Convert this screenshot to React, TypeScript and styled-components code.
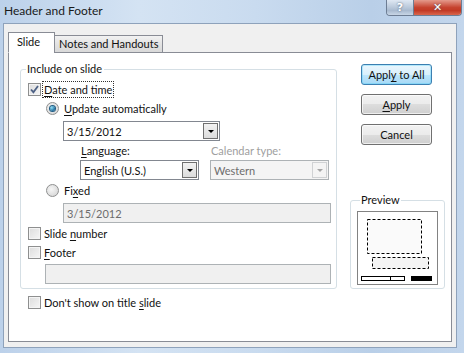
import { FC, ReactNode } from 'react'
import styled, { createGlobalStyle } from 'styled-components'

const GlobalStyle = createGlobalStyle`
  html, body {
    margin: 0;
    padding: 0;
    background: #c8d9ee;
  }
  body {
    font-family: Lato, 'Liberation Sans', Arial, sans-serif;
    font-size: 11px;
    color: #111;
  }
`

const Window = styled.div`
  width: 464px;
  height: 353px;
  display: flex;
  flex-direction: column;
  background: linear-gradient(90deg, #bcd1ea 0%, #d4e3f3 30%, #c9dbef 55%, #b9cfe8 80%, #c3d6ec 100%);
  overflow: hidden;
`

const TitleBar = styled.div`
  height: 23px;
  display: flex;
  justify-content: space-between;
  align-items: flex-start;
  flex-shrink: 0;
`

const Title = styled.div`
  padding: 3px 0 0 4px;
  font-size: 12px;
  color: #1a1a1a;
`

const Controls = styled.div`
  display: flex;
  margin-right: 2px;
  border: 1px solid #6d7d93;
  border-top: none;
  border-radius: 0 0 4px 4px;
  overflow: hidden;
  height: 15px;
`

const CtrlButton = styled.div<{ danger?: boolean }>`
  width: ${(p) => (p.danger ? 47 : 26)}px;
  display: flex;
  align-items: center;
  justify-content: center;
  background: ${(p) =>
    p.danger
      ? 'linear-gradient(#e49a8c, #c6432f 50%, #c23a25 70%, #d9664d)'
      : 'linear-gradient(#dfe8f3, #b9c8da 50%, #a9bacf 70%, #c8d6e6)'};
  border-left: ${(p) => (p.danger ? '1px solid #6d7d93' : 'none')};
  color: #fff;
  font-family: 'DejaVu Sans', sans-serif;
  font-weight: bold;
  font-size: 11px;
  line-height: 1;
  text-shadow: 0 0 2px #44546a;
`

const Client = styled.div`
  flex: 1;
  margin: 0 7px 5px 3px;
  background: #f0f0f0;
  border: 1px solid #8ea2bb;
  padding: 8px 4px 5px 4px;
  display: flex;
  flex-direction: column;
`

const Tabs = styled.div`
  display: flex;
  align-items: flex-end;
  height: 21px;
  position: relative;
  z-index: 1;
`

const Tab = styled.div<{ active?: boolean }>`
  height: ${(p) => (p.active ? 21 : 18)}px;
  box-sizing: border-box;
  padding: ${(p) => (p.active ? '2px 14px 0 8px' : '1px 4px 0 4px')};
  border: 1px solid #898c95;
  border-bottom: ${(p) => (p.active ? '1px solid #fff' : '1px solid #898c95')};
  background: ${(p) => (p.active ? '#fff' : 'linear-gradient(#f2f2f2, #e3e3e3 50%, #d9d9d9)')};
  margin-left: ${(p) => (p.active ? 0 : -1)}px;
  display: flex;
  align-items: flex-start;
`

const Panel = styled.div`
  flex: 1;
  margin-top: -1px;
  background: #fff;
  border: 1px solid #898c95;
  padding: 8px 6px 0 11px;
  display: grid;
  grid-template-columns: 317px 95px;
  column-gap: 13px;
  align-items: start;
`

const LeftCol = styled.div`
  display: flex;
  flex-direction: column;
`

const RightCol = styled.div`
  width: 95px;
  display: flex;
  flex-direction: column;
  align-items: stretch;
  padding-top: 3px;
`

const Group = styled.fieldset`
  margin: 0;
  padding: 0 0 4px 7px;
  border: 1px solid #d5dfe5;
  border-radius: 3px;
  display: flex;
  flex-direction: column;
  min-width: 0;
`

const Legend = styled.legend`
  padding: 0 2px 0 1px;
  margin-left: -2px;
  line-height: 16px;
`

const Row = styled.div<{ indent?: number; top?: number }>`
  display: flex;
  align-items: center;
  height: 19px;
  margin-left: ${(p) => p.indent ?? 0}px;
  margin-top: ${(p) => p.top ?? 0}px;
  gap: 2px;
`

const Box = styled.span`
  width: 11px;
  height: 11px;
  border: 1px solid #8e8f8f;
  background: linear-gradient(135deg, #dcdcdc, #f6f6f6);
  box-shadow: inset 0 0 0 1px #f4f4f4;
  display: inline-flex;
  align-items: center;
  justify-content: center;
  flex-shrink: 0;
`

const Radio = styled.span<{ on?: boolean }>`
  width: 11px;
  height: 11px;
  margin-right: 2px;
  border-radius: 50%;
  border: 1px solid #8e8f8f;
  background: radial-gradient(circle at 40% 40%, #f6f6f6, #d0d0d0);
  display: inline-flex;
  align-items: center;
  justify-content: center;
  flex-shrink: 0;

  &::after {
    content: '';
    display: ${(p) => (p.on ? 'block' : 'none')};
    width: 5px;
    height: 5px;
    border-radius: 50%;
    background: radial-gradient(circle at 35% 35%, #8fe0f7, #1a6a9c 70%);
    box-shadow: 0 0 0 1px #1f5b82;
  }
`

const Label = styled.span<{ focus?: boolean; dim?: boolean }>`
  color: ${(p) => (p.dim ? '#a0a0a0' : '#111')};
  outline: ${(p) => (p.focus ? '1px dotted #333' : 'none')};
  padding: 0 1px;
  line-height: 15px;
  white-space: nowrap;

  u {
    text-underline-offset: 2px;
  }
`

const Combo = styled.div<{ w: number; disabled?: boolean }>`
  width: ${(p) => p.w}px;
  height: 20px;
  box-sizing: border-box;
  border: 1px solid ${(p) => (p.disabled ? '#adb2b5' : '#828790')};
  background: ${(p) => (p.disabled ? '#f4f4f4' : '#fff')};
  color: ${(p) => (p.disabled ? '#6d6d6d' : '#111')};
  display: flex;
  align-items: center;
  justify-content: space-between;
  padding-left: 3px;
`

const Arrow = styled.span<{ disabled?: boolean }>`
  width: 15px;
  height: 16px;
  margin-right: 1px;
  box-sizing: border-box;
  border: 1px solid ${(p) => (p.disabled ? '#d0d2d4' : '#707070')};
  background: ${(p) => (p.disabled ? '#f4f4f4' : 'linear-gradient(#f2f2f2, #dcdcdc)')};
  display: flex;
  align-items: center;
  justify-content: center;

  &::after {
    content: '';
    border-left: 3px solid transparent;
    border-right: 3px solid transparent;
    border-top: 3px solid ${(p) => (p.disabled ? '#a5a5a5' : '#000')};
    margin-top: 1px;
  }
`

const TextField = styled.div<{ w: number }>`
  width: ${(p) => p.w}px;
  height: 20px;
  box-sizing: border-box;
  border: 1px solid #adb2b5;
  background: #f0f0f0;
  color: #6d6d6d;
  padding-left: 3px;
  display: flex;
  align-items: center;
  flex-shrink: 0;
`

const FieldRow = styled.div<{ indent: number; top: number }>`
  display: flex;
  margin-left: ${(p) => p.indent}px;
  margin-top: ${(p) => p.top}px;
`

const ComboRow = styled.div`
  display: flex;
  gap: 11px;
  margin-left: 52px;
  margin-top: 2px;
`

const Field = styled.div`
  display: flex;
  flex-direction: column;
  gap: 2px;
`

const Button = styled.div<{ primary?: boolean }>`
  width: 71px;
  height: 21px;
  margin: 0 12px 9px 11px;
  box-sizing: border-box;
  border: 1px solid ${(p) => (p.primary ? '#3c7fb1' : '#707070')};
  border-radius: 3px;
  background: ${(p) =>
    p.primary
      ? 'linear-gradient(#eaf6fd, #d9f0fc 50%, #bee6fd 50%, #a7d9f5)'
      : 'linear-gradient(#f2f2f2, #ebebeb 50%, #dddddd 50%, #cfcfcf)'};
  box-shadow: inset 0 0 0 1px ${(p) => (p.primary ? '#48d0fa55' : '#ffffffaa')};
  display: flex;
  align-items: center;
  justify-content: center;

  u {
    text-underline-offset: 2px;
  }
`

const PreviewGroup = styled.fieldset`
  margin: 39px 0 0 0;
  padding: 0 6px 3px 6px;
  min-width: 0;
  border: 1px solid #d5dfe5;
  border-radius: 3px;
`

const PreviewLegend = styled.legend`
  padding: 0 1px;
  margin-left: 3px;
  line-height: 14px;
`

const PreviewBox = styled.div`
  height: 74px;
  border: 1px solid #828282;
  box-sizing: border-box;
  margin-top: 4px;
`

const Check = () => (
  <svg width="9" height="9" viewBox="0 0 9 9">
    <path d="M1 4.5 L3.4 7.2 L8 1" fill="none" stroke="#4d6185" strokeWidth="1.8" />
  </svg>
)

const CheckRow: FC<{
  checked?: boolean
  top?: number
  indent?: number
  children: ReactNode
  focus?: boolean
}> = ({ checked, top, indent, children, focus }) => (
  <Row top={top} indent={indent}>
    <Box>{checked && <Check />}</Box>
    <Label focus={focus}>{children}</Label>
  </Row>
)

const PreviewArt = () => (
  <svg width="79" height="72" viewBox="0 0 79 72" style={{ display: 'block' }}>
    <rect x="9.5" y="7.5" width="54" height="34" fill="#fafafa" stroke="#000" strokeDasharray="3 2" />
    <rect x="14.5" y="45.5" width="56" height="11" fill="#f4f4f4" stroke="#000" strokeDasharray="3 2" />
    <rect x="3.5" y="64.5" width="43" height="4" fill="#fff" stroke="#000" />
    <line x1="32.5" y1="64" x2="32.5" y2="69" stroke="#000" />
    <rect x="53" y="64" width="21" height="5" fill="#000" />
  </svg>
)

const App: FC = () => {
  return (
    <>
      <GlobalStyle />
      <Window>
        <TitleBar>
          <Title>Header and Footer</Title>
          <Controls>
            <CtrlButton>?</CtrlButton>
            <CtrlButton danger>✕</CtrlButton>
          </Controls>
        </TitleBar>
        <Client>
          <Tabs>
            <Tab active>Slide</Tab>
            <Tab>Notes and Handouts</Tab>
          </Tabs>
          <Panel>
            <LeftCol>
              <Group>
                <Legend>Include on slide</Legend>
                <CheckRow checked focus top={3}>
                  <u>D</u>ate and time
                </CheckRow>
                <Row indent={18}>
                  <Radio on />
                  <Label>
                    <u>U</u>pdate automatically
                  </Label>
                </Row>
                <FieldRow indent={35} top={3}>
                  <Combo w={157}>
                    3/15/2012
                    <Arrow />
                  </Combo>
                </FieldRow>
                <ComboRow>
                  <Field>
                    <Label>
                      <u>L</u>anguage:
                    </Label>
                    <Combo w={119}>
                      English (U.S.)
                      <Arrow />
                    </Combo>
                  </Field>
                  <Field>
                    <Label dim>Calendar type:</Label>
                    <Combo w={119} disabled>
                      Western
                      <Arrow disabled />
                    </Combo>
                  </Field>
                </ComboRow>
                <Row indent={18} top={1}>
                  <Radio />
                  <Label>
                    Fi<u>x</u>ed
                  </Label>
                </Row>
                <FieldRow indent={35} top={3}>
                  <TextField w={268}>3/15/2012</TextField>
                </FieldRow>
                <CheckRow top={1}>
                  Slide <u>n</u>umber
                </CheckRow>
                <CheckRow>
                  <u>F</u>ooter
                </CheckRow>
                <FieldRow indent={17} top={2}>
                  <TextField w={286} />
                </FieldRow>
              </Group>
              <CheckRow top={4} indent={8}>
                Don't show on title <u>s</u>lide
              </CheckRow>
            </LeftCol>
            <RightCol>
              <Button primary>
                Appl<u>y</u>&nbsp;to All
              </Button>
              <Button>
                <u>A</u>pply
              </Button>
              <Button>Cancel</Button>
              <PreviewGroup>
                <PreviewLegend>Preview</PreviewLegend>
                <PreviewBox>
                  <PreviewArt />
                </PreviewBox>
              </PreviewGroup>
            </RightCol>
          </Panel>
        </Client>
      </Window>
    </>
  )
}

export default App
